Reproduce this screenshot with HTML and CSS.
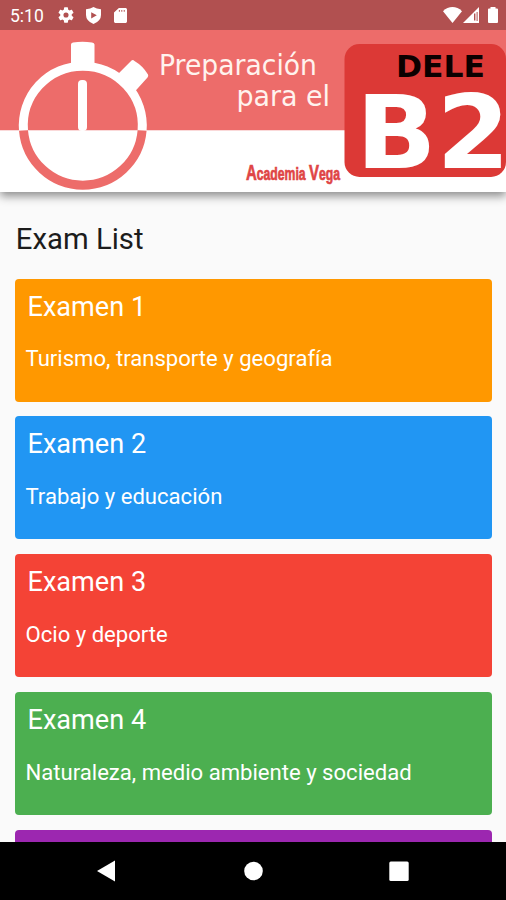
FILE: index.html
```html
<!DOCTYPE html>
<html lang="es">
<head>
<meta charset="utf-8">
<title>Preparación para el DELE B2</title>
<link rel="stylesheet" href="styles.css">
</head>
<body>
<div class="screen">
  <header class="top">
    <div class="status">
      <span class="clock">5:10</span>
      <svg class="ico gear" viewBox="2 2 20 20"><path d="M19.14 12.94c.04-.3.06-.61.06-.94s-.02-.64-.07-.94l2.03-1.58a.49.49 0 0 0 .12-.61l-1.92-3.32a.49.49 0 0 0-.59-.22l-2.39.96a7 7 0 0 0-1.62-.94l-.36-2.54a.48.48 0 0 0-.48-.41h-3.84a.48.48 0 0 0-.47.41l-.36 2.54c-.59.24-1.13.57-1.62.94l-2.39-.96a.48.48 0 0 0-.59.22L2.74 8.87a.48.48 0 0 0 .12.61l2.03 1.58c-.05.3-.09.63-.09.94s.02.64.07.94l-2.03 1.58a.49.49 0 0 0-.12.61l1.92 3.32c.12.22.37.29.59.22l2.39-.96c.5.38 1.03.7 1.62.94l.36 2.54c.05.24.24.41.48.41h3.84c.24 0 .44-.17.47-.41l.36-2.54a6.6 6.6 0 0 0 1.62-.94l2.39.96c.22.08.47 0 .59-.22l1.92-3.32a.48.48 0 0 0-.12-.61zM12 15.2a3.200 3.200 0 1 1 0-6.400 3.200 3.200 0 0 1 0 6.400z"/></svg>
      <svg class="ico shield" viewBox="0 0 15 17"><path fill-rule="evenodd" d="M7.500 0Q10.500 2 15 2.300V8Q15 14 7.500 17Q0 14 0 8V2.300Q4.500 2 7.500 0zM5.200 5.200v6.200l5.600-3.100z"/></svg>
      <svg class="ico sd" viewBox="4 2 16 20" preserveAspectRatio="none"><path fill-rule="evenodd" d="M18 2h-8L4 8v12c0 1.100.9 2 2 2h12c1.100 0 2-.9 2-2V4c0-1.100-.9-2-2-2zM10 4.500h1.200v2.500H10zM13 4.500h1.200v2.500H13zM16 4.500h1.200v2.500H16z"/></svg>
      <span class="spacer"></span>
      <svg class="ico wifi" viewBox="0 0 19 16" preserveAspectRatio="none"><path d="M9.500 16L0 4.200C5.500-1.400 13.500-1.400 19 4.200z"/></svg>
      <svg class="ico cell" viewBox="0 0 16 16"><path d="M0 16L16 0v16z"/><path class="cell-off" d="M11 6.500h1.400v7H11zM13.600 5h1v9h-1z"/></svg>
      <svg class="ico battery" viewBox="0 0 10 16"><path d="M2.500 0h5v1.500h1.500q1 0 1 1v12.500q0 1-1 1H1q-1 0-1-1V2.500q0-1 1-1h1.500z"/></svg>
    </div>
    <svg class="banner" viewBox="0 30 506 162">
      <rect class="coral" x="0" y="30" width="506" height="100.500"/>
      <rect class="paper" x="0" y="130.500" width="506" height="61.500"/>
      <path class="paper" d="M71 66V44.500Q71 43 73 42.600Q82.500 40.800 92 42.600Q94.500 43 94.500 44.500V66z"/>
      <path class="paper" d="M117 75L131.500 60.500Q133 59.500 134.500 61Q143 66 148 74.500Q148.700 76 147.500 77.500L133.500 93z"/>
      <path class="ring-top" d="M23.500 130.500A59.500 59.500 0 1 1 142.100 130.500"/>
      <path class="ring-bottom" d="M23.500 130.500A59.500 59.500 0 0 0 142.100 130.500"/>
      <rect class="paper" x="78" y="80" width="9" height="51" rx="4"/>
      <text class="light" x="159" y="75" textLength="158" lengthAdjust="spacingAndGlyphs">Preparación</text>
      <text class="light" x="236.500" y="106" textLength="93.500" lengthAdjust="spacingAndGlyphs">para el</text>
      <rect class="badge" x="344.500" y="44" width="161.500" height="133" rx="15"/>
      <text class="dele" x="396" y="77" textLength="89" lengthAdjust="spacingAndGlyphs">DELE</text>
      <text class="level" x="356" y="168" textLength="154" lengthAdjust="spacingAndGlyphs">B2</text>
      <text class="academy" x="246" y="180" textLength="94" lengthAdjust="spacingAndGlyphs"><tspan class="cap">A</tspan>cademia <tspan class="cap">V</tspan>ega</text>
    </svg>
  </header>
  <main class="content">
    <h1>Exam List</h1>
    <section class="card orange"><h2>Examen 1</h2><p>Turismo, transporte y geografía</p></section>
    <section class="card blue"><h2>Examen 2</h2><p>Trabajo y educación</p></section>
    <section class="card red"><h2>Examen 3</h2><p>Ocio y deporte</p></section>
    <section class="card green"><h2>Examen 4</h2><p>Naturaleza, medio ambiente y sociedad</p></section>
    <section class="card purple"></section>
  </main>
  <nav class="navbar">
    <svg viewBox="0 0 20 22"><path d="M1 11L19 .5v21z"/></svg>
    <svg viewBox="0 0 20 22"><circle cx="10.500" cy="11" r="9.300"/></svg>
    <svg viewBox="0 0 20 22"><rect x=".3" y="1.500" width="19.400" height="19.400" rx="1.500"/></svg>
  </nav>
</div>
</body>
</html>
```
FILE: styles.css
```css
* { box-sizing: border-box; }
body { margin: 0; font-family: Roboto, "Liberation Sans", sans-serif; }
h1, h2, p { margin: 0; font-weight: 400; white-space: nowrap; }
.screen { display: flex; flex-direction: column; width: 506px; height: 900px; overflow: hidden; background: #fafafa; }

.top { flex: none; height: 192px; box-shadow: 0 4px 9px rgba(0, 0, 0, .45); z-index: 1; }
.status { display: flex; align-items: center; height: 30px; padding: 0 8px 0 10px; background: #b15050; color: #fff; }
.clock { width: 48px; font-size: 17.5px; line-height: 30px; padding-top: 2px; }
.ico { flex: none; fill: #fff; }
.gear { width: 16px; height: 16px; }
.shield { width: 15px; height: 17px; margin-left: 12px; }
.sd { width: 13px; height: 15px; margin-left: 13px; }
.spacer { flex: 1; }
.wifi { width: 19px; height: 16px; }
.cell { width: 16px; height: 16px; margin-left: 1px; }
.cell-off { fill: #b15050; }
.battery { width: 10px; height: 16px; margin-left: 9px; }

.banner { display: block; width: 506px; height: 162px; }
.coral { fill: #ed6c6a; }
.paper { fill: #fff; }
.ring-top, .ring-bottom { fill: none; stroke: #fff; stroke-width: 9px; }
.ring-bottom { stroke: #ed6c6a; }
.badge { fill: #dc3936; }
.light { font: 27.500px "DejaVu Sans", sans-serif; fill: #fff3ee; }
.dele { font: bold 31px "DejaVu Sans", sans-serif; fill: #0c0000; }
.level { font: bold 101px "DejaVu Sans", sans-serif; fill: #fff; }
.academy { font: bold 17.500px "Liberation Sans", sans-serif; fill: #df4545; stroke: #df4545; stroke-width: .7px; }
.cap { font-size: 21.500px; }

.content { flex: 1; min-height: 0; overflow: hidden; padding: 29px 14px 0 15px; }
h1 { height: 57.500px; padding-left: .8px; font-size: 29.300px; line-height: 36px; color: #1c1c1c; }
.card { height: 123px; margin-bottom: 14.800px; padding: 12px 10.500px; border-radius: 4px; color: #fff; }
.card h2 { padding-left: 2px; font-size: 27.100px; line-height: 32px; }
.card p { margin-top: 22.700px; font-size: 22.100px; line-height: 26px; }
.orange { background: #ff9800; }
.blue { background: #2196f3; }
.red { background: #f44336; }
.green { background: #4caf50; }
.purple { background: #9c27b0; }

.navbar { display: flex; flex: none; align-items: center; justify-content: space-between; height: 58px; padding: 0 97px 0 96px; background: #000; }
.navbar svg { width: 20px; height: 22px; fill: #fff; }
```
